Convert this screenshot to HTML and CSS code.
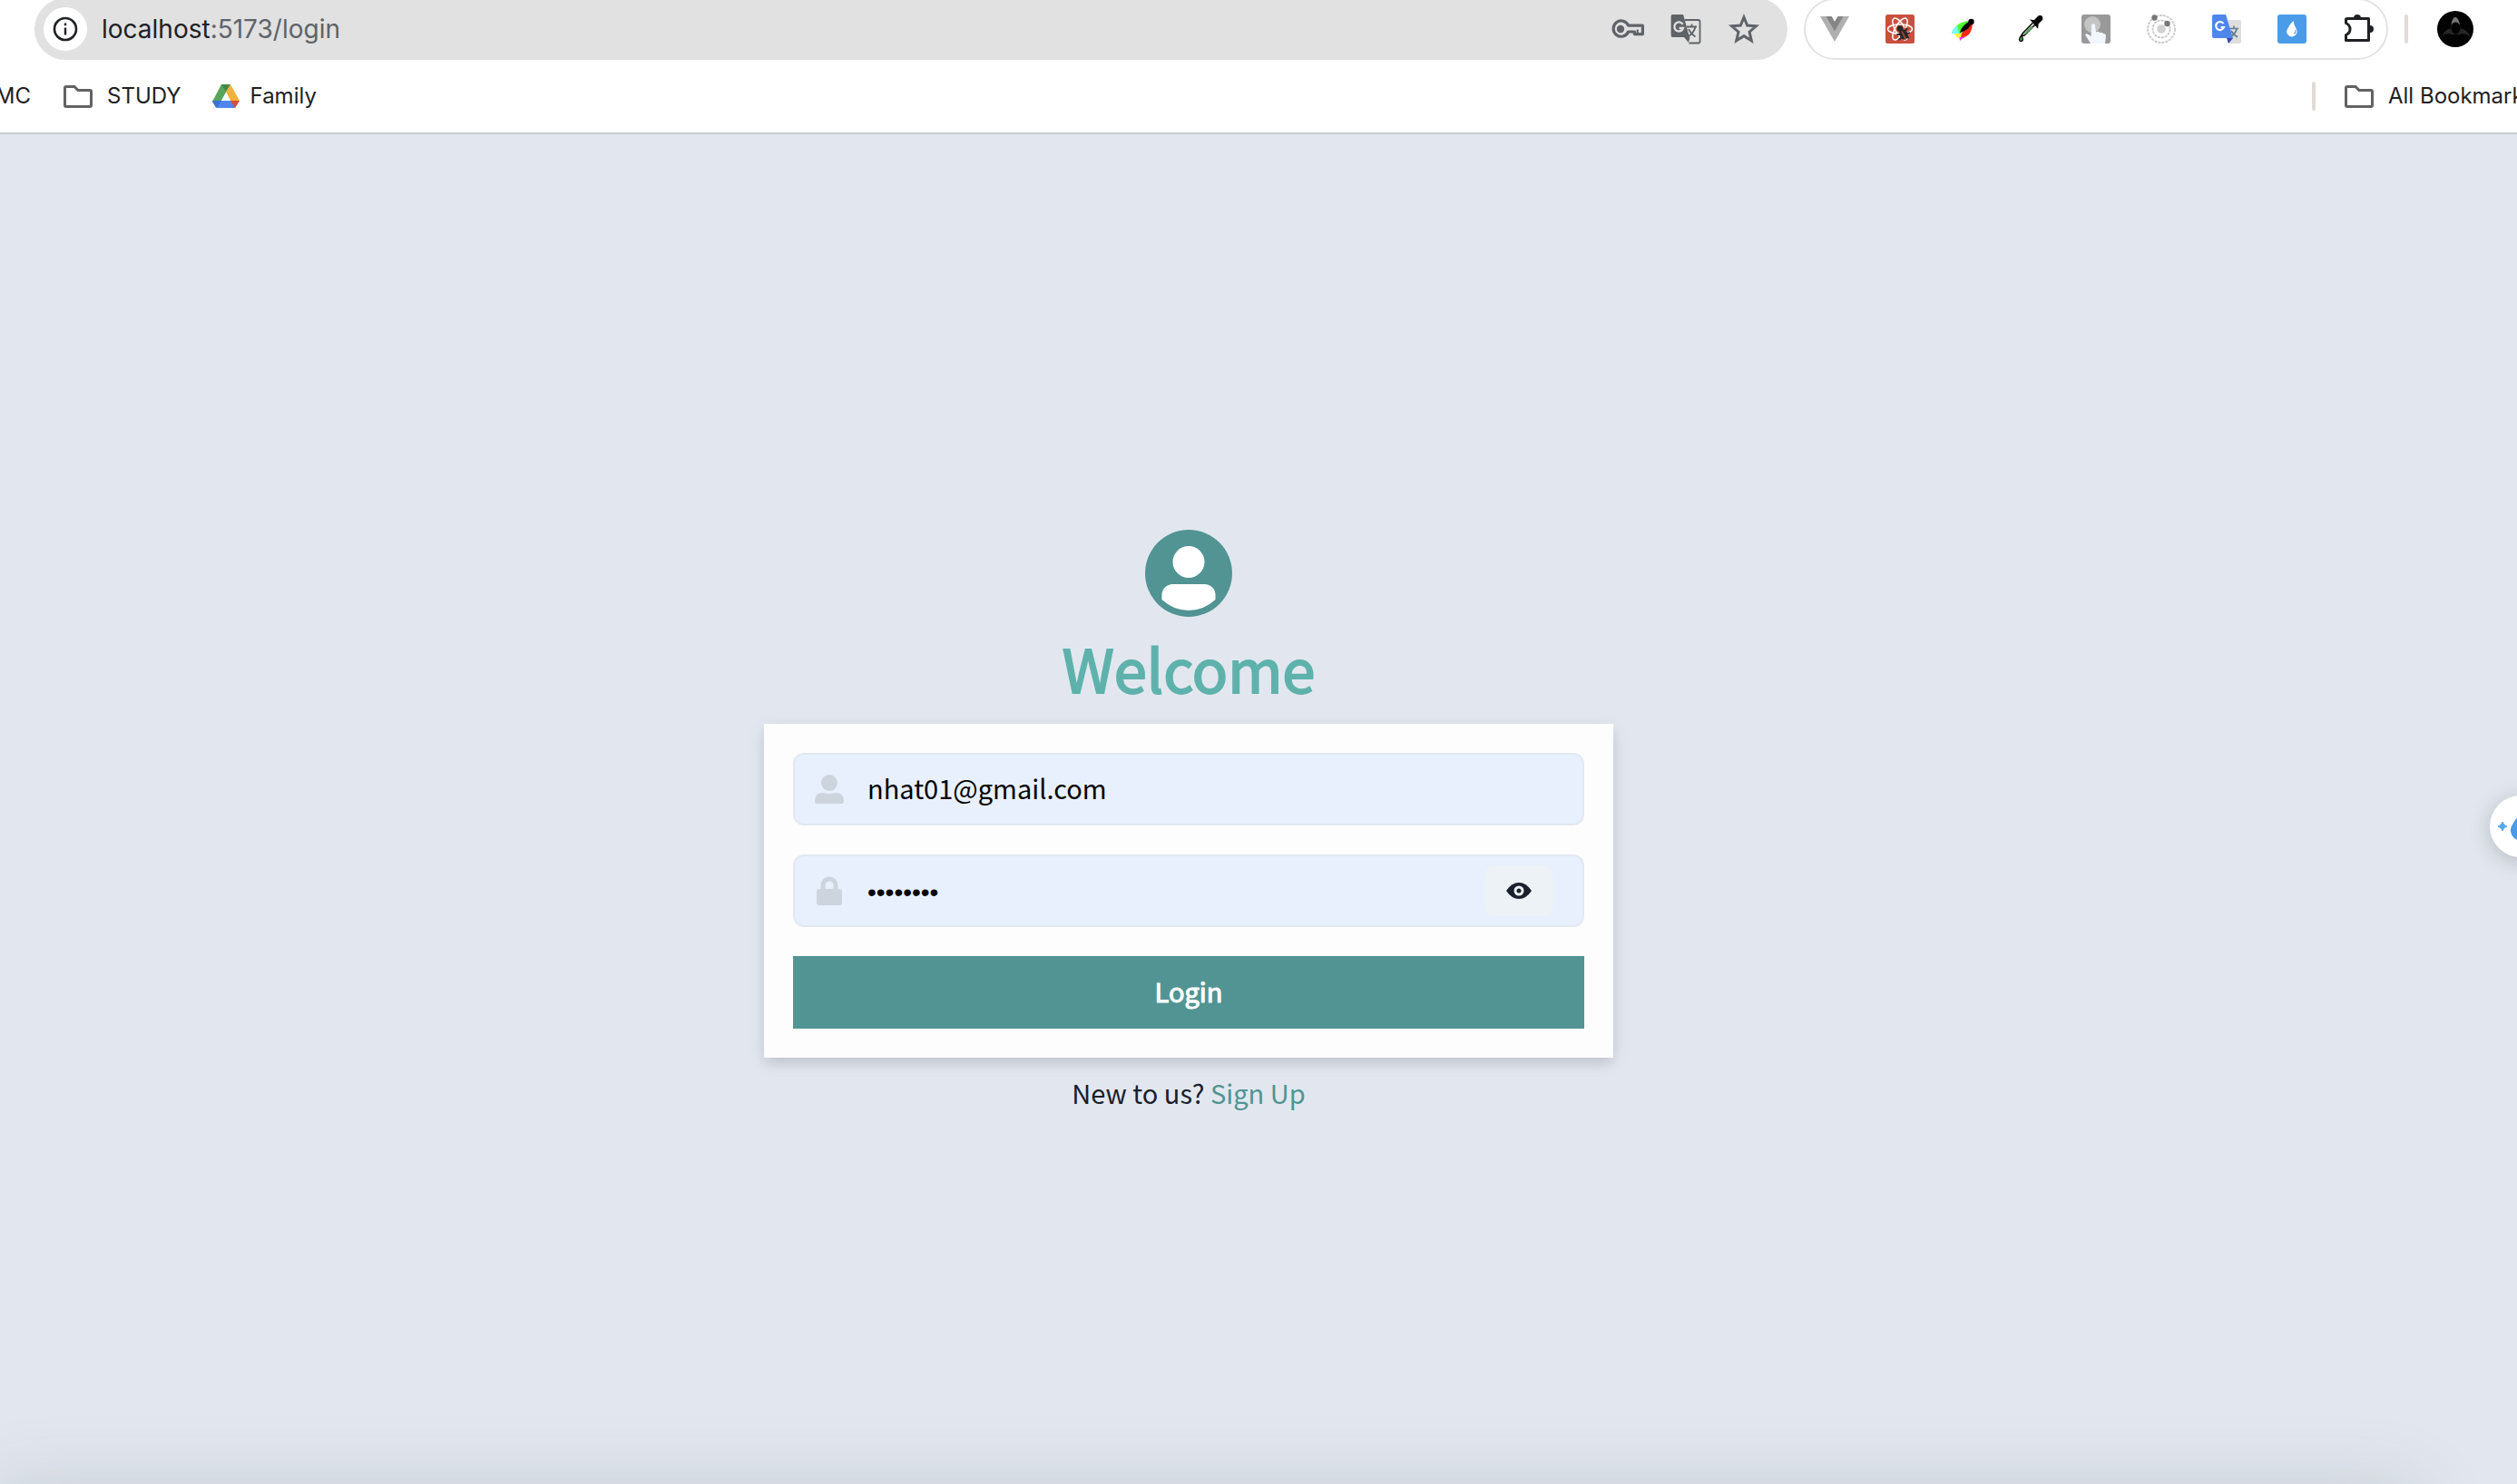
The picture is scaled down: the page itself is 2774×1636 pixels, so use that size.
FILE: index.html
```html
<!DOCTYPE html>
<html lang="en">
<head>
<meta charset="utf-8">
<meta name="viewport" content="width=device-width, initial-scale=1">
<title>Login</title>
<link rel="stylesheet" href="styles.css">
</head>
<body>
<header class="browser">
  <div class="toolbar">
    <div class="omnibox">
      <button class="site-info" type="button" aria-label="Site information">
        <svg class="icon-28" viewBox="0 0 28 28"><circle cx="14" cy="14" r="12" fill="none" stroke="#202124" stroke-width="2.6"/><path d="M12.8 12.4h2.4v8h-2.4zM12.8 7.6h2.4v2.6h-2.4z" fill="#202124"/></svg>
      </button>
      <div class="url"><span class="host">localhost</span>:5173/login</div>
      <div class="omnibox-actions">
        <button class="icon-button" type="button" aria-label="Passwords">
          <svg class="icon-36" viewBox="0 0 36 36"><g fill="none" stroke="#5f6368" stroke-width="3.2" stroke-linejoin="round"><path d="M18.6 14.2H34.4V23.6H25.4V21H18.6A8.6 8.6 0 1 1 18.6 14.2Z"/></g><circle cx="10" cy="18" r="4.2" fill="#5f6368"/><path d="M27.6 18.6h2.2v4h-2.2z" fill="#5f6368"/></svg>
        </button>
        <button class="icon-button" type="button" aria-label="Translate this page">
          <svg class="icon-36" viewBox="0 0 36 36"><path d="M17 8h14.500a2 2 0 0 1 2 2v21.500a2 2 0 0 1-2 2h-10" fill="none" stroke="#5f6368" stroke-width="1.8"/><path d="M3.500 2h11.600l6.900 25h-18.500a1.900 1.900 0 0 1-1.900-1.900v-21.200a1.900 1.900 0 0 1 1.900-1.900zM16 27h6.500l-1.500 6z" fill="#5f6368"/><path d="M14.600 12.800a5 5 0 1 0 .500 4.200h-4.500" fill="none" stroke="#e1e1e1" stroke-width="2.300"/><path d="M19 15.500h11M24.500 12.500v3M28.500 15.500q-1.500 7-8.500 11M21 18q2.500 5.500 7.500 8.500" fill="none" stroke="#5f6368" stroke-width="1.800"/></svg>
        </button>
        <button class="icon-button" type="button" aria-label="Bookmark this tab">
          <svg class="icon-36" viewBox="0 0 36 36"><path d="M18 5l3.700 9 9.700.8-7.400 6.400 2.300 9.500-8.300-5.100-8.300 5.100 2.300-9.500-7.400-6.400 9.700-.8z" fill="none" stroke="#5f6368" stroke-width="3"/></svg>
        </button>
      </div>
    </div>
    <div class="extensions">
      <svg class="icon-32" viewBox="0 0 32 32"><path d="M0 2h12.500L16 8l3.500-6H32L16 30z" fill="#b0b0b0"/><path d="M6.500 2h6L16 8l3.500-6h6L16 18.500z" fill="#858585"/></svg>
      <svg class="icon-32" viewBox="0 0 32 32"><rect width="32" height="32" rx="2.500" fill="#c9503e"/><g fill="none" stroke="#fff" stroke-width="1.500"><ellipse cx="16" cy="16" rx="13.500" ry="5.200"/><ellipse cx="16" cy="16" rx="13.500" ry="5.200" transform="rotate(60 16 16)"/><ellipse cx="16" cy="16" rx="13.500" ry="5.200" transform="rotate(120 16 16)"/></g><path d="M14 18l8-4 4 10-8 5z" fill="#c9503e"/><g fill="#272727"><circle cx="16" cy="15.500" r="3.200"/><ellipse cx="20" cy="22" rx="4.500" ry="6" transform="rotate(-28 20 22)"/></g><path d="M12.500 22l4 0M14.500 28l3.500-3M22 18l2-3M23 21l4-1M23 24l3 2" stroke="#272727" stroke-width="1.800"/><path d="M18 18.500l4.500 9" stroke="#c9503e" stroke-width="1.200"/></svg>
      <svg class="icon-32" viewBox="0 0 32 32"><path d="M25 7C14 6 5 11 1 20l9 2z" fill="#4dff32"/><path d="M7 12Q2 16 1 21l8 0z" fill="#7ff"/><path d="M4 21h12l-5 5Q6 27 4 21z" fill="#fff43b"/><path d="M24 8Q24 25 11 25.500 11 17 24 8z" fill="#f32a18"/><path d="M16 25Q12 26 10 29L9.500 25z" fill="#ff2cff"/><path d="M24 6Q12 11 10 20 22 17 24 6z" fill="#050505"/><circle cx="22.500" cy="8" r="3.200" fill="#000"/></svg>
      <svg class="icon-32" viewBox="0 0 32 32"><path d="M21 11L9 23l-3 1 1-3L18.500 9" fill="#eee" stroke="#111" stroke-width="1.600"/><path d="M16 13l3 1-9 8-2 0z" fill="#5aa75d"/><path d="M17 6.500l3 .5 5-5q4-1.500 3.500 3.500l-4.500 4.500-.500 4z" fill="#080808" stroke="#080808" stroke-width="1.500"/><path d="M5.500 23q4 6-.2 6.500Q1.500 29 5.500 23z" fill="#479e54" stroke="#111" stroke-width="1.300"/></svg>
      <svg class="icon-32" viewBox="0 0 32 32"><rect width="32" height="32" rx="3" fill="#999"/><circle cx="12" cy="11" r="9" fill="#c4c4c4"/><path d="M11 11.500q2-3 4 0l1 8q3-1.500 4 .5 3-1 4 1 3 0 3 3l-1 8H10L4 22q2-2 5 1l1.500 1z" fill="#f1f6ff"/></svg>
      <svg class="icon-32" viewBox="0 0 32 32"><g fill="none" stroke="#c8c8c8" stroke-width="1.800"><circle cx="16" cy="16" r="15" stroke-dasharray="3 1"/><circle cx="16" cy="16" r="9.500" stroke-dasharray="3 1"/></g><circle cx="16" cy="16" r="4.800" fill="#d2d2d2"/><g fill="#777"><circle cx="8.500" cy="3.500" r="3.200"/><circle cx="22.500" cy="10" r="3.200"/></g></svg>
      <svg class="icon-32" viewBox="0 0 32 32"><path d="M14 6h16a2 2 0 0 1 2 2v22a2 2 0 0 1-2 2H18z" fill="#dedede"/><path d="M19 15.500h10M24 12.500v3M27 16q-1 5-7 9M21 18q2 4 7 7" fill="none" stroke="#607d8b" stroke-width="1.700"/><path d="M16 26h7l-5 6z" fill="#3949ab"/><path d="M2 0h13l8 26H2a2 2 0 0 1-2-2V2a2 2 0 0 1 2-2z" fill="#4f86ec"/><path d="M12.500 10a4.500 4.500 0 1 0 .5 4H9.500" fill="none" stroke="#fff" stroke-width="2.200"/></svg>
      <svg class="icon-32" viewBox="0 0 32 32"><rect width="32" height="32" rx="3" fill="#4a9be8"/><path d="M17.500 7Q18 11 20.500 15.500A5.600 5.600 0 1 1 11 16Q13 11 17.500 7z" fill="#fff"/><path d="M20 17q.5 3-1.500 4.500" fill="none" stroke="#4a9be8" stroke-width="1.100"/></svg>
      <svg class="icon-puzzle" viewBox="-2 0 34 32"><path d="M3.500 4.500H26.500V28.500H1.500V22.500Q6 20.500 6 16T1.500 9.500V5Z" fill="none" stroke="#202124" stroke-width="3" stroke-linejoin="round"/><path d="M10 4a4 4 0 0 1 8 0zM28 12a4 4 0 0 1 0 8z" fill="#202124"/></svg>
    </div>
    <span class="divider"></span>
    <svg class="icon-40" viewBox="0 0 40 40"><circle cx="20" cy="20" r="20" fill="#030303"/><path d="M6 28Q7 21 15 19.500 16 7 20 6.500 24 7 26 19.500 34 21 36 28 29 23 25 26H16Q10 23 6 28z" fill="#272727"/><path d="M15.500 15Q17 7 20 7t5 8Q20 10 15.500 15z" fill="#777"/><ellipse cx="20.500" cy="19" rx="5" ry="6.500" fill="#000"/></svg>
  </div>
  <nav class="bookmarks" aria-label="Bookmarks">
    <a class="bookmark bookmark-cut" href="#">MC</a>
    <a class="bookmark" href="#"><svg class="icon-32" viewBox="0 0 32 32"><path d="M3 5.500h9l4 4h13a1.500 1.500 0 0 1 1.500 1.500v15a1.500 1.500 0 0 1-1.500 1.500H3A1.500 1.500 0 0 1 1.500 26V7A1.500 1.500 0 0 1 3 5.500z" fill="none" stroke="#626262" stroke-width="3"/></svg>STUDY</a>
    <a class="bookmark bookmark-drive" href="#"><svg class="icon-30" viewBox="0 0 30 30"><path d="M10 2h10l-10 18-6 8-4-7z" fill="#58a55c"/><path d="M10 2h10l-5 8z" fill="#438843"/><path d="M20 2l10 18H20L15 10z" fill="#f2b03c"/><path d="M0 20h30l-5 8H5z" fill="#5086ec"/><path d="M0 20h10l-5 8z" fill="#3a70db"/><path d="M20 20h10l-5 8z" fill="#da4e3d"/><path d="M15 11l5 9H10z" fill="#fff"/></svg>Family</a>
    <div class="all-bookmarks">
      <span class="divider"></span>
      <a class="bookmark" href="#"><svg class="icon-32" viewBox="0 0 32 32"><path d="M3 5.500h9l4 4h13a1.500 1.500 0 0 1 1.500 1.500v15a1.500 1.500 0 0 1-1.500 1.500H3A1.500 1.500 0 0 1 1.500 26V7A1.500 1.500 0 0 1 3 5.500z" fill="none" stroke="#626262" stroke-width="3"/></svg>All Bookmarks</a>
    </div>
  </nav>
</header>

<main class="page">
  <section class="login">
    <svg class="avatar" viewBox="0 0 96 96"><circle cx="48" cy="48" r="48" fill="#519493"/><circle cx="48" cy="35.500" r="17.500" fill="#fff"/><path d="M18.500 77V72a12 12 0 0 1 12-12H65.500a12 12 0 0 1 12 12V77Q64.500 89 48 89T18.500 77z" fill="#fff"/></svg>
    <h1 class="title">Welcome</h1>
    <form class="card">
      <div class="field">
        <svg class="field-icon" viewBox="0 0 32 32"><circle cx="16" cy="9" r="9" fill="#cdd4de"/><path d="M0 30v-1Q0 20 9 20q7 2 14 0 9 0 9 9v1a2 2 0 0 1-2 2H2a2 2 0 0 1-2-2z" fill="#cdd4de"/></svg>
        <input class="input" type="email" aria-label="Email" value="nhat01@gmail.com">
      </div>
      <div class="field">
        <svg class="field-icon" viewBox="0 0 32 32"><path d="M9 15V10a7 7 0 0 1 14 0v5" fill="none" stroke="#cdd4de" stroke-width="5"/><rect x="2" y="14" width="28" height="18" rx="3" fill="#cdd4de"/></svg>
        <input class="input input-password" type="password" aria-label="Password" value="password">
        <button class="reveal" type="button" aria-label="Show password">
          <svg class="icon-28" viewBox="0 0 28 28"><path d="M0 14Q6 5 14 5t14 9q-6 9-14 9T0 14z" fill="#1a202c"/><circle cx="14" cy="14" r="4" fill="#1a202c" stroke="#edf2f7" stroke-width="3"/></svg>
        </button>
      </div>
      <button class="submit" type="submit">Login</button>
    </form>
    <p class="signup">New to us? <a class="signup-link" href="#">Sign Up</a></p>
  </section>
  <button class="assistant" type="button" aria-label="Assistant">
    <svg class="assistant-icon" viewBox="0 0 56 36"><path d="M9 13q1 4 5 5-4 1-5 5-1-4-5-5 4-1 5-5z" fill="#55a7ee" stroke="#55a7ee"/><path d="M32 1Q33 8 37 15A11 11 0 1 1 20 16Q24 8 32 1z" fill="#4a9be8"/></svg>
  </button>
  <div class="dock-shadow"></div>
</main>
</body>
</html>
```
FILE: styles.css
```css
* {
  box-sizing: border-box;
}

body {
  display: flex;
  flex-direction: column;
  min-height: 100vh;
  margin: 0;
  background: #e2e7ef;
  color: #1a202c;
  font-family: "Noto Sans CJK JP", "Noto Sans", sans-serif;
  font-size: 29px;
  line-height: 48px;
}

button {
  padding: 0;
  border: 0;
  color: inherit;
  font: inherit;
}

a {
  color: inherit;
  text-decoration: none;
}

svg {
  display: block;
  flex: none;
}

.icon-28 { width: 28px; height: 28px; }
.icon-30 { width: 30px; height: 30px; }
.icon-32 { width: 32px; height: 32px; }
.icon-36 { width: 36px; height: 36px; }
.icon-40 { width: 40px; height: 40px; }
.icon-puzzle { width: 34px; height: 32px; }

/* Browser chrome */
.browser {
  overflow: hidden;
  border-bottom: 2px solid #c8ccca;
  background: #fff;
  color: #202124;
  font-family: Inter, Roboto, sans-serif;
  font-size: 24px;
  line-height: 32px;
}

.toolbar {
  display: flex;
  align-items: center;
  height: 68px;
  margin-top: -2px;
  padding: 0 48px 0 38px;
}

.omnibox {
  display: flex;
  flex: 1;
  align-items: center;
  height: 68px;
  padding: 0 30px 0 10px;
  border-radius: 34px;
  background: #e1e1e1;
}

.site-info {
  display: flex;
  align-items: center;
  justify-content: center;
  width: 48px;
  height: 48px;
  border-radius: 50%;
  background: #fff;
}

.url {
  flex: 1;
  padding-left: 16px;
  color: #5f6368;
  font-size: 28px;
}

.host {
  color: #202124;
}

.omnibox-actions {
  display: flex;
  gap: 28px;
}

.icon-button {
  background: none;
}

.extensions {
  display: flex;
  align-items: center;
  gap: 40px;
  height: 68px;
  margin-left: 18px;
  padding: 0 14px 0 16px;
  border: 2px solid #e2e2e2;
  border-radius: 34px;
}

.divider {
  flex: none;
  width: 4px;
  height: 32px;
  border-radius: 2px;
  background: #e3dad8;
}

.toolbar .divider {
  margin: 0 32px 0 18px;
}

.bookmarks {
  display: flex;
  align-items: center;
  height: 80px;
}

.bookmark {
  display: flex;
  align-items: center;
  gap: 16px;
  margin-right: 34px;
  white-space: nowrap;
}

.bookmark-cut {
  justify-content: flex-end;
  width: 34px;
  margin-right: 36px;
}

.bookmark-drive {
  gap: 12px;
}

.all-bookmarks {
  display: flex;
  gap: 32px;
  width: 226px;
  margin-left: auto;
  overflow: hidden;
}

/* Login page */
.page {
  position: relative;
  display: flex;
  flex: 1;
  align-items: center;
  justify-content: center;
  padding: 30px 154px 0 0;
  overflow: hidden;
}

.login {
  display: flex;
  flex-direction: column;
  align-items: center;
  gap: 16px;
  width: 100%;
  max-width: 936px;
}

.avatar {
  width: 96px;
  height: 96px;
}

.title {
  margin: 0;
  padding-bottom: 6px;
  color: #5fb2ac;
  font-size: 65px;
  font-weight: 400;
  line-height: 80px;
  -webkit-text-stroke: 2px #5fb2ac;
}

.card {
  display: flex;
  flex-direction: column;
  gap: 32px;
  width: 100%;
  padding: 32px;
  background: #fdfdfd;
  box-shadow: 0 8px 12px -2px rgba(0, 0, 0, 0.1), 0 4px 20px rgba(0, 0, 0, 0.08);
}

.field {
  display: flex;
  align-items: center;
  height: 80px;
  padding: 0 32px 0 22px;
  border: 2px solid #e2e8f0;
  border-radius: 12px;
  background: #e8f0fe;
}

.field-icon {
  width: 32px;
  height: 32px;
}

.input {
  flex: 1;
  min-width: 0;
  height: 76px;
  padding: 0 0 4px 26px;
  border: 0;
  outline: 0;
  background: none;
  color: #000;
  font: inherit;
}

.input-password {
  padding: 4px 0 0 26px;
  font-family: "Liberation Sans", sans-serif;
  font-size: 28px;
}

.reveal {
  display: flex;
  align-items: center;
  justify-content: center;
  width: 76px;
  height: 56px;
  border-radius: 12px;
  background: #edf2f7;
}

.submit {
  height: 80px;
  padding-bottom: 4px;
  background: #519493;
  color: #fff;
  -webkit-text-stroke: 1px #fff;
}

.signup {
  margin: 0;
  padding-bottom: 4px;
  line-height: 44px;
}

.signup-link {
  color: #519493;
}

.assistant {
  position: absolute;
  top: 729px;
  right: -38px;
  width: 68px;
  height: 68px;
  overflow: hidden;
  border-radius: 50%;
  background: #fff;
  box-shadow: 0 4px 24px rgba(0, 0, 0, 0.2);
}

.assistant-icon {
  width: 56px;
  height: 36px;
  margin-left: 5px;
}

/* Soft shade along the lower edge of the window */
.dock-shadow {
  position: absolute;
  right: 100px;
  bottom: -80px;
  left: -20px;
  height: 80px;
  border-radius: 40px;
  box-shadow: 0 0 80px rgba(60, 65, 75, 0.15);
}
```
